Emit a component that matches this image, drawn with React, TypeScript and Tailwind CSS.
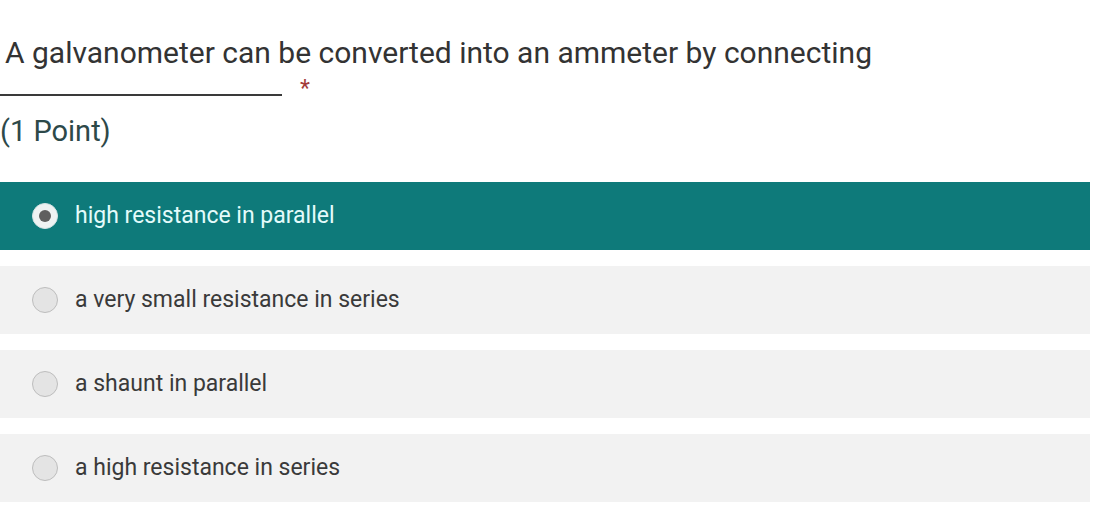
import React from "react";

const options = [
  "high resistance in parallel",
  "a very small resistance in series",
  "a shaunt in parallel",
  "a high resistance in series",
];

function Radio({ checked }: { checked: boolean }) {
  return (
    <span
      className={`flex h-[26px] w-[26px] shrink-0 items-center justify-center rounded-full border ${
        checked ? "border-[#d6e4e4] bg-[#eef2f2]" : "border-[#bdbdbd] bg-[#e4e4e4]"
      }`}
    >
      {checked && <span className="h-[12px] w-[12px] rounded-full bg-[#5f5f5f]" />}
    </span>
  );
}

export default function App() {
  return (
    <div className="h-[507px] w-[1093px] overflow-hidden bg-white font-['Roboto','Liberation_Sans',sans-serif]">
      <div className="pt-[33px]">
        <p className="pl-[5px] text-[30px] leading-[40px] text-[#333333]">
          A galvanometer can be converted into an ammeter by connecting
        </p>
        <div className="mt-[4px] flex items-start">
          <span className="mt-[17px] h-[1.5px] w-[282px] bg-[#3a3a3a]" />
          <span className="ml-[18px] text-[23px] leading-[24px] text-[#a33a3a]">*</span>
        </div>
        <p className="mt-[13px] text-[29px] leading-[34px] text-[#2d4949]">(1 Point)</p>
      </div>
      <div className="mt-[34px] flex w-[1090px] flex-col gap-[16px]">
        {options.map((o, i) => (
          <div
            key={o}
            className={`flex h-[68px] items-center pl-[32px] ${
              i === 0 ? "bg-[#0e7a7a] text-[#e4fbfb]" : "bg-[#f2f2f2] text-[#3a3a3a]"
            }`}
          >
            <Radio checked={i === 0} />
            <span className="ml-[17px] text-[23px]">{o}</span>
          </div>
        ))}
      </div>
    </div>
  );
}
